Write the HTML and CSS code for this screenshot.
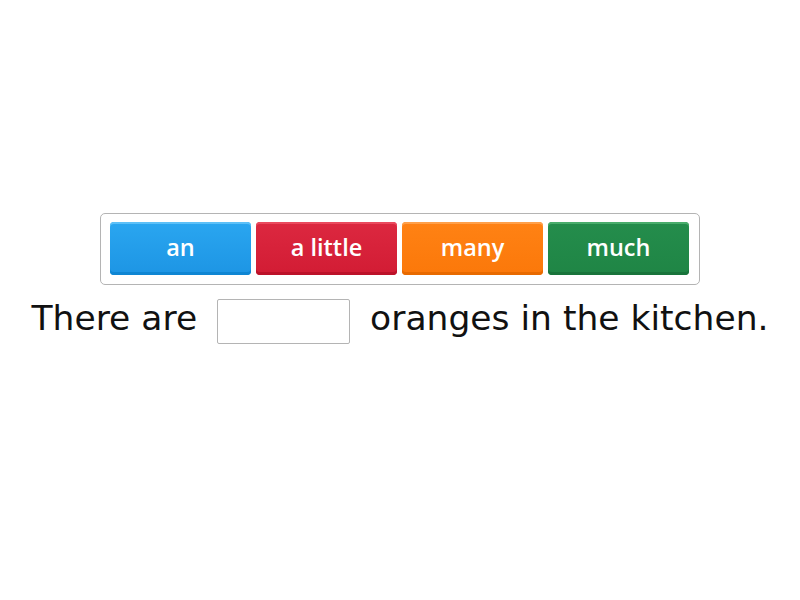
FILE: index.html
```html
<!DOCTYPE html>
<html>
<head>
<meta charset="utf-8">
<link rel="stylesheet" href="styles.css">
</head>
<body>
<div class="page">
  <div class="bank">
    <div class="tile blue">an</div>
    <div class="tile red">a little</div>
    <div class="tile orange">many</div>
    <div class="tile green">much</div>
  </div>
  <div class="sentence">
    <span class="words">There are</span>
    <span class="blank"></span>
    <span class="words">oranges in the kitchen.</span>
  </div>
</div>
</body>
</html>
```

FILE: styles.css
```css
html, body {
  margin: 0;
  padding: 0;
  background: #fff;
}
.page {
  width: 800px;
  height: 600px;
  display: flex;
  flex-direction: column;
  align-items: center;
  padding-top: 213px;
  box-sizing: border-box;
  font-family: "Open Sans", sans-serif;
}
.bank {
  width: 600px;
  height: 72px;
  box-sizing: border-box;
  border: 1px solid #b4b4b4;
  border-radius: 5px;
  padding: 8px 10px 8px 9px;
  display: flex;
  gap: 5px;
}
.tile {
  flex: 1;
  height: 53px;
  border-radius: 4px;
  color: #fff;
  font-size: 23.5px;
  font-weight: 600;
  display: flex;
  align-items: center;
  justify-content: center;
  box-sizing: border-box;
  padding-bottom: 3px;
}
.blue {
  background: linear-gradient(#2aa6f0, #1d95e4);
  box-shadow: inset 0 2px 0 #5cc0f8, inset 0 -3px 0 #0f86d3;
}
.red {
  background: linear-gradient(#dc2840, #d21c34);
  box-shadow: inset 0 2px 0 #ea4a5e, inset 0 -3px 0 #bc1229;
}
.orange {
  background: linear-gradient(#ff8214, #fb780a);
  box-shadow: inset 0 2px 0 #ffa04a, inset 0 -3px 0 #e86a00;
}
.green {
  background: linear-gradient(#248d4c, #1f8545);
  box-shadow: inset 0 2px 0 #49ad6c, inset 0 -3px 0 #19743b;
}
.sentence {
  margin-top: 13px;
  display: flex;
  align-items: center;
  gap: 20px;
  font-family: "DejaVu Sans", sans-serif;
  font-size: 34.5px;
  color: #111;
}
.words {
  padding-bottom: 6px;
}
.blank {
  width: 133px;
  height: 45px;
  box-sizing: border-box;
  border: 1px solid #b4b4b4;
  border-radius: 2px;
}
```
